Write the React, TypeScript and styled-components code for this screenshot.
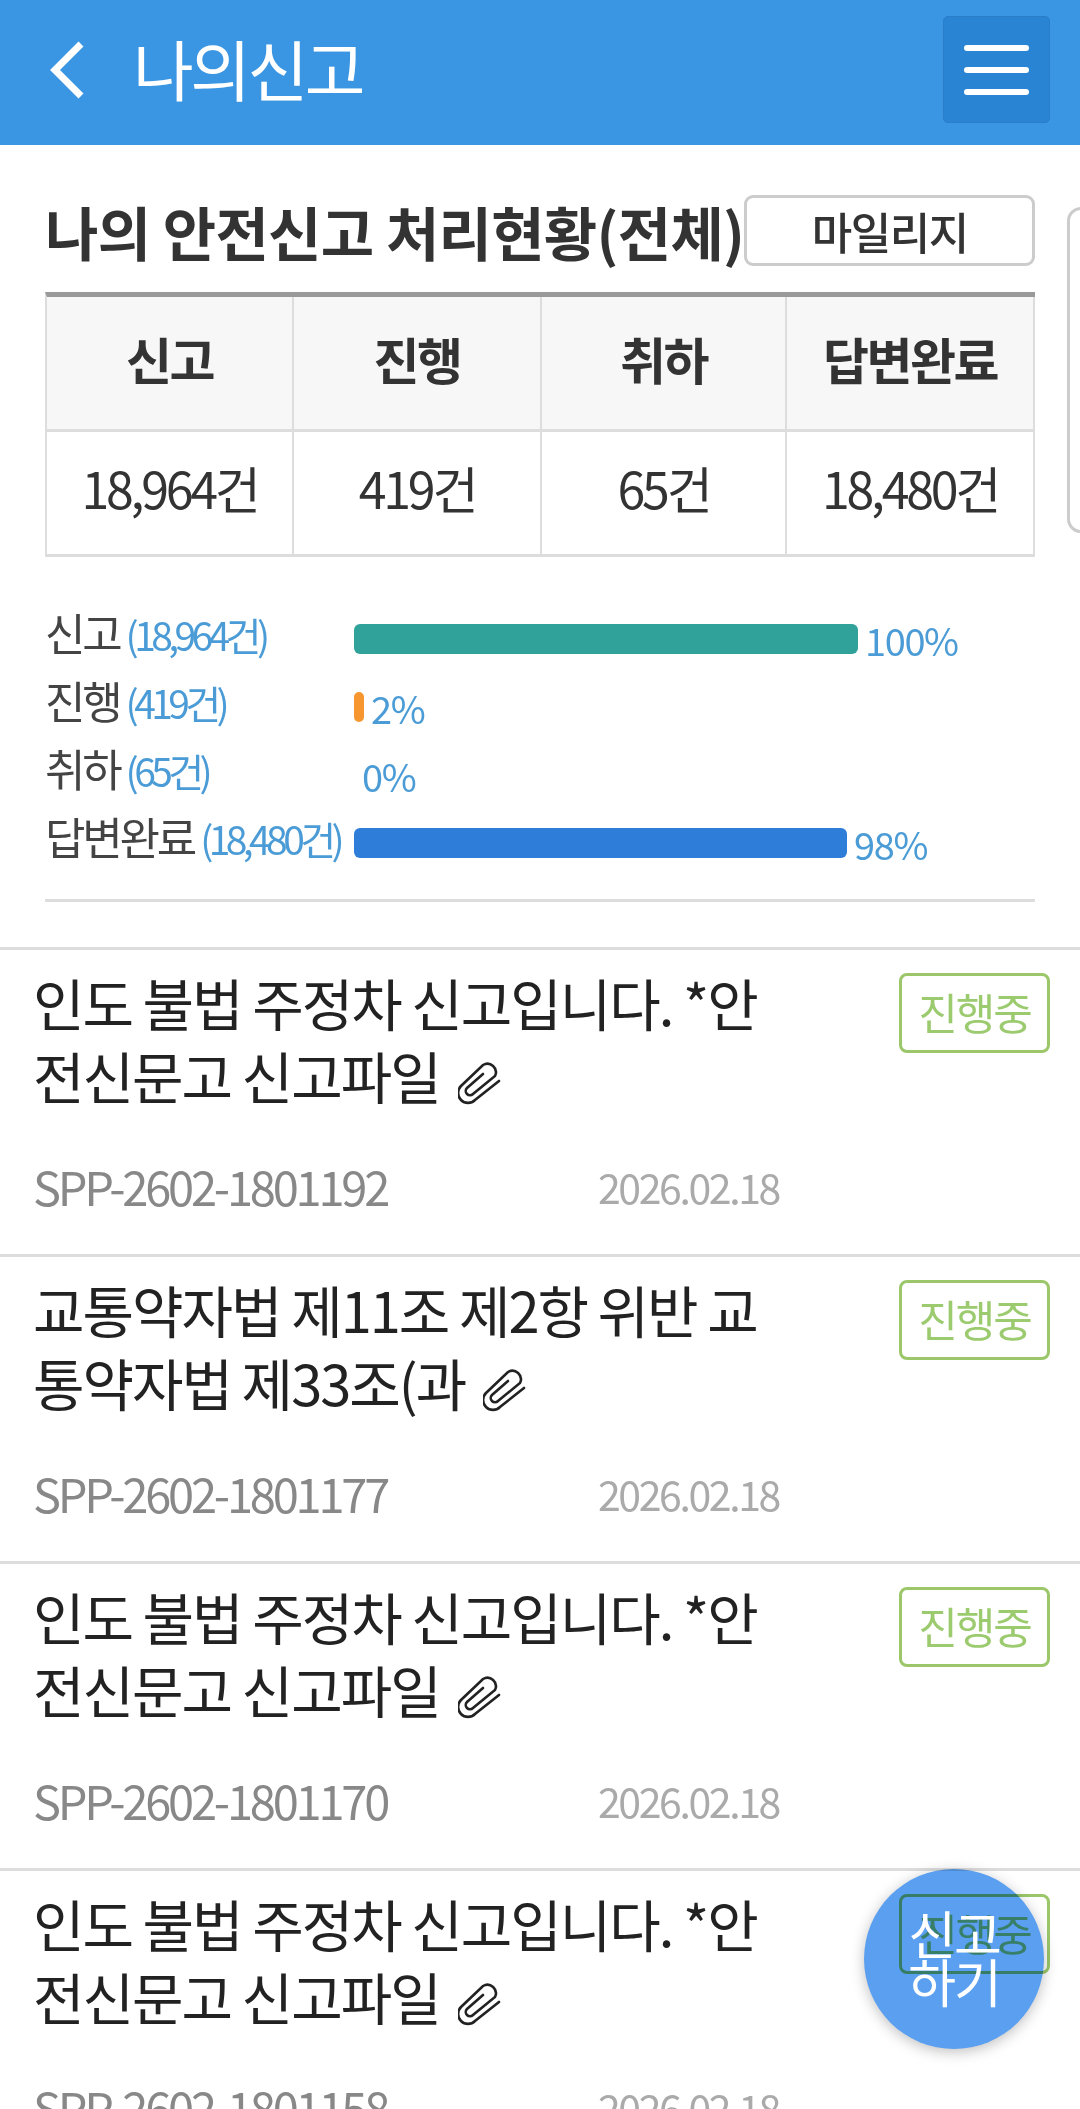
import React from "react";
import styled, { createGlobalStyle } from "styled-components";

const GlobalStyle = createGlobalStyle`
  html, body {
    margin: 0;
    padding: 0;
    background: #fff;
  }
  body {
    font-family: "Noto Sans CJK KR", "Noto Sans", sans-serif;
    color: #333;
  }
  * {
    box-sizing: border-box;
  }
`;

const Page = styled.div`
  position: relative;
  width: 1080px;
  height: 2109px;
  overflow: hidden;
  background: #fff;
`;

const Header = styled.header`
  display: flex;
  align-items: center;
  height: 145px;
  padding: 0 30px 6px 48px;
  background: #3a96e2;
`;

const BackButton = styled.button`
  display: flex;
  padding: 0;
  border: none;
  background: none;
`;

const HeaderTitle = styled.h1`
  flex: 1;
  margin: -6px 0 0 47px;
  font-size: 66px;
  font-weight: 400;
  letter-spacing: -3.5px;
  color: #fff;
`;

const MenuButton = styled.button`
  display: flex;
  flex-direction: column;
  justify-content: center;
  gap: 16px;
  width: 107px;
  height: 107px;
  padding: 0 20px;
  border: 1px solid #2a7dc8;
  border-radius: 5px;
  background: #2a84d4;

  span {
    display: block;
    height: 6px;
    border-radius: 3px;
    background: #fff;
  }
`;

const Slider = styled.div`
  display: flex;
  align-items: flex-start;
  gap: 32px;
`;

const SummarySlide = styled.section`
  flex: 0 0 1035px;
  padding: 50px 0 0 45px;
`;

const NextSlidePeek = styled.div`
  flex: 0 0 400px;
  height: 326px;
  margin-top: 62px;
  border: 3px solid #ccc;
  border-radius: 14px;
`;

const TitleRow = styled.div`
  display: flex;
  align-items: center;
  justify-content: space-between;
  height: 71px;
`;

const SummaryTitle = styled.h2`
  margin: 0;
  font-size: 58px;
  font-weight: 700;
  letter-spacing: -0.7px;
  white-space: nowrap;
  color: #333;
`;

const MileageButton = styled.button`
  flex: 0 0 291px;
  height: 71px;
  padding-bottom: 6px;
  border: 3px solid #ccc;
  border-radius: 9px;
  background: #fff;
  font-family: inherit;
  font-size: 44px;
  font-weight: 500;
  letter-spacing: -1.5px;
  color: #333;
`;

const Table = styled.div`
  display: grid;
  grid-template-columns: 247px 248px 245px 248px;
  margin-top: 26px;
  border-top: 5px solid #999;
  border-bottom: 3px solid #ddd;
  border-left: 2px solid #ddd;
`;

const Cell = styled.div<{ $head?: boolean }>`
  display: flex;
  align-items: center;
  justify-content: center;
  height: ${(p) => (p.$head ? "135px" : "122px")};
  padding-bottom: ${(p) => (p.$head ? "10px" : "12px")};
  border-right: 2px solid #ddd;
  border-bottom: ${(p) => (p.$head ? "3px solid #ddd" : "none")};
  background: ${(p) => (p.$head ? "#f7f7f7" : "#fff")};
  font-size: 50px;
  font-weight: ${(p) => (p.$head ? 700 : 400)};
  letter-spacing: ${(p) => (p.$head ? "-2.5px" : "-3.2px")};
  color: #333;
`;

const Stats = styled.div`
  display: flex;
  flex-direction: column;
  gap: 16px;
  margin-top: 56px;
  padding-bottom: 30px;
  border-bottom: 3px solid #ddd;
`;

const StatRow = styled.div`
  display: flex;
  align-items: center;
  height: 52px;
`;

const StatLabel = styled.div`
  flex: 0 0 309px;
  margin-top: -14px;
  font-size: 44px;
  letter-spacing: -3.2px;
  white-space: nowrap;
  color: #444;

  small {
    margin-left: 6px;
    font-size: 39px;
    letter-spacing: -4.6px;
    color: #4b9cd6;
  }
`;

const BarTrack = styled.div`
  flex: 1;
  display: flex;
  align-items: center;
  gap: 7px;
`;

const Bar = styled.div<{ $color: string }>`
  height: 30px;
  border-radius: 6px;
  background: ${(p) => p.$color};
`;

const Percent = styled.span<{ $empty?: boolean }>`
  padding-left: ${(p) => (p.$empty ? "8px" : "0")};
  font-size: 38px;
  letter-spacing: -1.4px;
  color: #4b9cd6;
`;

const ReportList = styled.ul`
  margin: 45px 0 0;
  padding: 0;
  list-style: none;
`;

const ReportItem = styled.li`
  height: 307px;
  padding: 23px 30px 0 33px;
  border-top: 3px solid #ddd;
`;

const ReportTop = styled.div`
  display: flex;
  align-items: flex-start;
  justify-content: space-between;
`;

const ReportTitle = styled.div`
  width: 735px;
  margin-top: -8px;
  font-size: 56px;
  line-height: 73px;
  letter-spacing: -2px;
  color: #222;
`;

const ClipIcon = styled.svg`
  display: inline-block;
  width: 44px;
  height: 44px;
  margin-left: 18px;
  vertical-align: -6px;
`;

const StatusBadge = styled.span`
  display: flex;
  align-items: center;
  justify-content: center;
  width: 151px;
  height: 80px;
  padding-bottom: 4px;
  border: 3px solid #9bc76a;
  border-radius: 8px;
  font-size: 43px;
  letter-spacing: -2px;
  color: #9ccb6f;
`;

const ReportMeta = styled.div`
  display: flex;
  align-items: center;
  margin-top: 40px;
`;

const ReportCode = styled.span`
  flex: 0 0 565px;
  font-size: 47px;
  letter-spacing: -3.2px;
  color: #888;
`;

const ReportDate = styled.span`
  font-size: 41px;
  letter-spacing: -2.4px;
  color: #aaa;
`;

const ReportFab = styled.button`
  position: absolute;
  left: 864px;
  top: 1869px;
  width: 180px;
  height: 180px;
  padding: 0 0 4px;
  border: none;
  border-radius: 50%;
  background: none;
  box-shadow: 0 3px 14px rgba(0, 0, 0, 0.25);
  font-family: inherit;
  font-size: 52px;
  line-height: 48px;
  letter-spacing: -2px;
  color: #fff;

  &::before {
    content: "";
    position: absolute;
    inset: 0;
    border-radius: 50%;
    background: #5a9ff0;
    mix-blend-mode: multiply;
  }

  span {
    position: relative;
  }
`;

const counts = [
  { label: "신고", value: "18,964건" },
  { label: "진행", value: "419건" },
  { label: "취하", value: "65건" },
  { label: "답변완료", value: "18,480건" },
];

const stats = [
  { label: "신고", value: "(18,964건)", width: 504, color: "#30a29a", percent: "100%" },
  { label: "진행", value: "(419건)", width: 10, color: "#f7962f", percent: "2%" },
  { label: "취하", value: "(65건)", width: 0, color: "transparent", percent: "0%" },
  { label: "답변완료", value: "(18,480건)", width: 493, color: "#2d7dd9", percent: "98%" },
];

const reports = [
  { title: "인도 불법 주정차 신고입니다. *안전신문고 신고파일", code: "SPP-2602-1801192" },
  { title: "교통약자법 제11조 제2항 위반 교통약자법 제33조(과", code: "SPP-2602-1801177" },
  { title: "인도 불법 주정차 신고입니다. *안전신문고 신고파일", code: "SPP-2602-1801170" },
  { title: "인도 불법 주정차 신고입니다. *안전신문고 신고파일", code: "SPP-2602-1801158" },
];

const App: React.FC = () => (
  <Page>
    <GlobalStyle />
    <Header>
      <BackButton aria-label="뒤로">
        <svg width="38" height="60" viewBox="0 0 38 60" fill="none">
          <path d="M33 4 L7 30 L33 56" stroke="#fff" strokeWidth="7" />
        </svg>
      </BackButton>
      <HeaderTitle>나의신고</HeaderTitle>
      <MenuButton aria-label="메뉴">
        <span />
        <span />
        <span />
      </MenuButton>
    </Header>

    <Slider>
      <SummarySlide>
        <TitleRow>
          <SummaryTitle>나의 안전신고 처리현황(전체)</SummaryTitle>
          <MileageButton>마일리지</MileageButton>
        </TitleRow>
        <Table>
          {counts.map((c) => (
            <Cell $head key={c.label}>
              {c.label}
            </Cell>
          ))}
          {counts.map((c) => (
            <Cell key={c.label}>{c.value}</Cell>
          ))}
        </Table>
        <Stats>
          {stats.map((s) => (
            <StatRow key={s.label}>
              <StatLabel>
                {s.label}
                <small>{s.value}</small>
              </StatLabel>
              <BarTrack>
                {s.width > 0 && <Bar $color={s.color} style={{ width: s.width }} />}
                <Percent $empty={s.width === 0}>{s.percent}</Percent>
              </BarTrack>
            </StatRow>
          ))}
        </Stats>
      </SummarySlide>
      <NextSlidePeek />
    </Slider>

    <ReportList>
      {reports.map((r) => (
        <ReportItem key={r.code}>
          <ReportTop>
            <ReportTitle>
              {r.title}
              <ClipIcon viewBox="0 0 44 44" fill="none" stroke="#222" strokeWidth="2.6" strokeLinecap="round">
                <path d="M41 20 L17 39 A9.5 9.5 0 0 1 3 25 L25 4 A8.5 8.5 0 0 1 37 15 L15 33 A4 4 0 0 1 9 27 L25 13" />
              </ClipIcon>
            </ReportTitle>
            <StatusBadge>진행중</StatusBadge>
          </ReportTop>
          <ReportMeta>
            <ReportCode>{r.code}</ReportCode>
            <ReportDate>2026.02.18</ReportDate>
          </ReportMeta>
        </ReportItem>
      ))}
    </ReportList>

    <ReportFab>
      <span>
        신고
        <br />
        하기
      </span>
    </ReportFab>
  </Page>
);

export default App;
